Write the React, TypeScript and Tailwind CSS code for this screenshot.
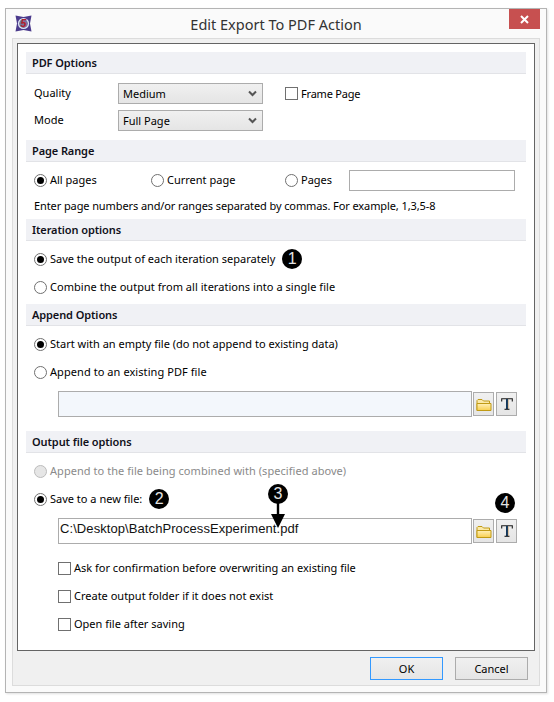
const font = { fontFamily: '"Noto Sans", sans-serif' };

function Radio({ checked, disabled }: { checked?: boolean; disabled?: boolean }) {
  return (
    <span className={`flex h-[13px] w-[13px] shrink-0 items-center justify-center rounded-full border ${disabled ? 'border-[#bcbcbc] bg-[#e6e6e6]' : 'border-[#707070] bg-white'}`}>
      {checked && <span className="h-[7px] w-[7px] rounded-full bg-black" />}
    </span>
  );
}

function RadioRow({ label, checked, disabled, className = '' }: { label: string; checked?: boolean; disabled?: boolean; className?: string }) {
  return (
    <div className={`flex items-center gap-[3px] ${className}`}>
      <Radio checked={checked} disabled={disabled} />
      <span className={disabled ? 'text-[#8a8a8a]' : ''}>{label}</span>
    </div>
  );
}

function Check({ label, className = '' }: { label: string; className?: string }) {
  return (
    <div className={`flex items-center gap-[3px] ${className}`}>
      <span className="h-[13px] w-[13px] shrink-0 border border-[#707070] bg-white" />
      <span>{label}</span>
    </div>
  );
}

function Header({ children }: { children: string }) {
  return (
    <div className="flex h-[22px] items-center border-b border-[#e2e3e7] bg-[#f0f1f5] pl-[6px] font-semibold tracking-[-0.1px] text-[#10101a]">
      {children}
    </div>
  );
}

function Select({ value }: { value: string }) {
  return (
    <div className="flex h-[21px] w-[145px] items-center justify-between border border-[#acacac] bg-gradient-to-b from-[#f0f0f0] to-[#e5e5e5] pl-[4px] pr-[4px]">
      <span>{value}</span>
      <svg width="9" height="7" viewBox="0 0 9 7" className="mr-[1px]">
        <path d="M1 1.5 L4.5 5 L8 1.5" fill="none" stroke="#555" strokeWidth="2" />
      </svg>
    </div>
  );
}

function Folder() {
  return (
    <svg width="16" height="13" viewBox="0 0 16 13" className="mt-[3px]">
      <defs>
        <linearGradient id="folderFill" x1="0" y1="0" x2="0" y2="1">
          <stop offset="0" stopColor="#fff0b8" />
          <stop offset="1" stopColor="#f8cf4e" />
        </linearGradient>
      </defs>
      <path d="M1 11.5 V1.5 L2 0.5 H6 L7.5 2 H13.5 V4.5" fill="#fbe9a8" stroke="#c09a14" />
      <path d="M1 11.5 V4.5 H15 V11.5 Z" fill="url(#folderFill)" stroke="#c09a14" />
    </svg>
  );
}

function TIcon() {
  return (
    <svg width="12" height="12" viewBox="0 0 12 12">
      <path d="M0.7 3.5 V0.8 H11.3 V3.5" fill="none" stroke="#1a1a1a" strokeWidth="1.1" />
      <path d="M6 1 V11" stroke="#12385e" strokeWidth="2" />
      <path d="M7.3 1.5 V10.5" stroke="#c98a3a" strokeWidth="0.5" />
      <path d="M3.5 11.3 H8.5" stroke="#1a1a1a" strokeWidth="1.1" />
    </svg>
  );
}

function ToolButton({ children }: { children: React.ReactNode }) {
  return (
    <div className="flex h-[24px] w-[21px] items-center justify-center border border-[#acacac] bg-gradient-to-b from-[#f0f0f0] to-[#e5e5e5]">
      {children}
    </div>
  );
}

function PathRow({ value, tinted, className = '' }: { value?: string; tinted?: boolean; className?: string }) {
  return (
    <div className={`flex items-center ${className}`}>
      <div className={`flex h-[26px] w-[414px] items-center border border-[#acacac] pb-[5px] pl-[1px] text-[13px] tracking-[0.08px] text-[#111] ${tinted ? 'bg-[#f3f7fc]' : 'bg-white'}`} style={{ fontFamily: '"Liberation Sans", sans-serif' }}>
        {value}
      </div>
      <div className="ml-[1px] flex gap-[2px]">
        <ToolButton><Folder /></ToolButton>
        <ToolButton><TIcon /></ToolButton>
      </div>
    </div>
  );
}

function Badge({ n, className = '' }: { n: number; className?: string }) {
  return (
    <span className={`flex h-[20px] w-[20px] items-center justify-center rounded-full bg-black text-[16px] leading-none text-[#e4e4e4] ${className}`} style={{ fontFamily: '"Liberation Sans", sans-serif' }}>
      {n}
    </span>
  );
}

export default function App() {
  return (
    <div className="relative h-[702px] w-[554px] overflow-hidden bg-white pl-[5px] pt-[8px] text-[11px] leading-[14px] text-black" style={font}>
      <div className="h-[685px] w-[542px] border border-[#b4b4b4] bg-[#fafafa] shadow-[1px_1px_2px_rgba(0,0,0,0.12)]">
        <div className="relative flex h-[29px] items-center justify-center text-[14.5px] text-[#333]">
          <svg width="17" height="17" viewBox="0 0 17 17" className="absolute left-[9px] top-[6px]">
            <path d="M0.5 0.5 L8.5 2 L16.5 0.5 L15 8.5 L16.5 16.5 L8.5 15 L0.5 16.5 L2 8.5 Z" fill="#4b3a8c" />
            <circle cx="8.5" cy="8.5" r="5.6" fill="#dfe6f4" />
            <circle cx="8.5" cy="8.5" r="4.4" fill="#77759f" />
            <text x="8.5" y="12.2" textAnchor="middle" fontSize="10.5" fontWeight="700" fontStyle="italic" fill="#b3202a" style={{ fontFamily: '"Liberation Sans", sans-serif' }}>5</text>
          </svg>
          <span>Edit Export To PDF Action</span>
          <div className="absolute right-[6px] top-0 flex h-[20px] w-[31px] items-center justify-center bg-[#c75050]">
            <svg width="9" height="9" viewBox="0 0 9 9">
              <path d="M1 1 L8 8 M8 1 L1 8" stroke="white" strokeWidth="2" />
            </svg>
          </div>
        </div>
        <div className="mx-[6px] h-[648px] w-[528px] border border-[#dcdcdc] bg-[#f0f0f0] p-[4px]">
          <div className="h-[608px] w-[518px] border border-[#646464] bg-white px-[8px] pt-[8px]">
            <Header>PDF Options</Header>
            <div className="flex h-[66px] flex-col gap-[6px] pl-[8px] pt-[9px]">
              <div className="flex items-center">
                <span className="w-[84px] pb-[2px]">Quality</span>
                <Select value="Medium" />
                <Check label="Frame Page" className="ml-[22px] tracking-[-0.2px]" />
              </div>
              <div className="flex items-center">
                <span className="w-[84px] pb-[2px]">Mode</span>
                <Select value="Full Page" />
              </div>
            </div>
            <Header>Page Range</Header>
            <div className="flex h-[57px] flex-col pl-[8px]">
              <div className="flex h-[36px] items-center">
                <RadioRow label="All pages" checked className="w-[117px]" />
                <RadioRow label="Current page" className="w-[134px]" />
                <RadioRow label="Pages" className="w-[64px]" />
                <div className="h-[21px] w-[166px] border border-[#acacac]" />
              </div>
              <div className="pt-[1px] tracking-[-0.1px]">Enter page numbers and/or ranges separated by commas. For example, 1,3,5-8</div>
            </div>
            <Header>Iteration options</Header>
            <div className="flex h-[63px] flex-col justify-start pl-[8px] pt-[4px]">
              <div className="flex h-[28px] items-center">
                <RadioRow label="Save the output of each iteration separately" checked />
                <Badge n={1} className="ml-[7px]" />
              </div>
              <RadioRow label="Combine the output from all iterations into a single file" className="h-[28px] tracking-[0.04px]" />
            </div>
            <Header>Append Options</Header>
            <div className="flex h-[105px] flex-col pl-[8px] pt-[4px]">
              <RadioRow label="Start with an empty file (do not append to existing data)" checked className="h-[28px]" />
              <RadioRow label="Append to an existing PDF file" className="h-[28px] tracking-[0.07px]" />
              <PathRow tinted className="ml-[24px] mt-[5px]" />
            </div>
            <Header>Output file options</Header>
            <div className="flex flex-col pl-[8px] pt-[4px]">
              <RadioRow label="Append to the file being combined with (specified above)" disabled className="h-[28px] tracking-[0.05px]" />
              <div className="flex h-[28px] items-center">
                <RadioRow label="Save to a new file:" checked />
                <Badge n={2} className="ml-[7px]" />
              </div>
              <PathRow value="C:\Desktop\BatchProcessExperiment.pdf" className="ml-[24px] mt-[5px]" />
              <Check label="Ask for confirmation before overwriting an existing file" className="ml-[24px] mt-[10px] h-[28px]" />
              <Check label="Create output folder if it does not exist" className="ml-[24px] h-[28px]" />
              <Check label="Open file after saving" className="ml-[24px] h-[28px]" />
            </div>
          </div>
          <div className="flex justify-end gap-[12px] pr-[7px] pt-[6px]">
            <div className="flex h-[23px] w-[73px] items-center justify-center border border-[#3399ff] bg-gradient-to-b from-[#f0f0f0] to-[#e5e5e5]">OK</div>
            <div className="flex h-[23px] w-[73px] items-center justify-center border border-[#acacac] bg-gradient-to-b from-[#f0f0f0] to-[#e5e5e5]">Cancel</div>
          </div>
        </div>
      </div>
      <div className="absolute left-[268px] top-[484px] flex flex-col items-center">
        <Badge n={3} />
        <svg width="14" height="25" viewBox="0 0 14 25" className="-mt-[1px]">
          <path d="M5.8 0 H8.2 V11 H14 L7 25 L0 11 H5.8 Z" fill="black" />
        </svg>
      </div>
      <Badge n={4} className="absolute left-[495px] top-[493px]" />
    </div>
  );
}
